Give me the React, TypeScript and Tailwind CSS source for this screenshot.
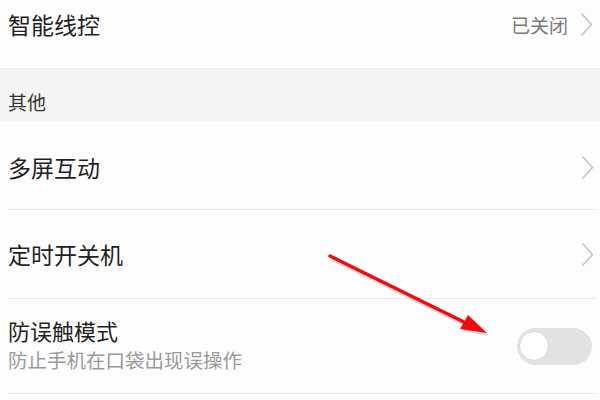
const font = { fontFamily: '"Noto Sans CJK SC", "Noto Sans", sans-serif' };

const Chevron = () => (
  <svg width="13" height="25" viewBox="0 0 13 25" className="shrink-0">
    <path d="M1.5 1.5 L11.5 12.5 L1.5 23.5" fill="none" stroke="#c4c4c4" strokeWidth="1.6" />
  </svg>
);

const Divider = () => <div className="ml-2 mr-1 h-px bg-[#ebebeb]" />;

export default function App() {
  return (
    <div
      className="relative w-[600px] h-[400px] overflow-hidden bg-[#fdfdfd] text-[#1f1f1f]"
      style={font}
    >
      <div className="-mt-5 flex h-[88px] items-center justify-between pl-2 pr-[7px]">
        <span className="text-[23px] leading-none">智能线控</span>
        <div className="flex items-center gap-3">
          <span className="text-[19px] leading-none text-[#7a7a7a]">已关闭</span>
          <Chevron />
        </div>
      </div>

      <div className="flex h-[53px] items-end border-t border-[#efefef] bg-[#f5f5f5] pb-[10px] pl-2">
        <span className="text-[19px] leading-none text-[#333]">其他</span>
      </div>

      <div className="flex h-[88px] items-center justify-between pl-2 pr-[6px] pt-1">
        <span className="text-[23px] leading-none">多屏互动</span>
        <Chevron />
      </div>
      <Divider />

      <div className="flex h-[88px] items-center justify-between pl-2 pr-[6px]">
        <span className="text-[23px] leading-none">定时开关机</span>
        <Chevron />
      </div>
      <Divider />

      <div className="flex h-[94px] items-center justify-between pl-2 pr-2">
        <div className="flex flex-col gap-[9px] pb-1">
          <span className="text-[22px] leading-none">防误触模式</span>
          <span className="text-[19.5px] leading-none text-[#9a9a9a]">防止手机在口袋出现误操作</span>
        </div>
        <div className="flex h-[37px] w-[75px] items-center rounded-full bg-[#e2e2e2] px-[2px]">
          <div className="h-[30px] w-[30px] rounded-full border border-[#d6d6d6] bg-white" />
        </div>
      </div>
      <Divider />

      <svg
        className="pointer-events-none absolute left-0 top-0"
        width="600"
        height="400"
        viewBox="0 0 600 400"
      >
        <g transform="translate(2,3)" opacity="0.25">
          <line x1="330" y1="256" x2="468" y2="324" stroke="#555" strokeWidth="3.5" />
          <polygon points="487,333 461,328 468,316" fill="#555" />
        </g>
        <line x1="330" y1="256" x2="468" y2="324" stroke="#f00c0c" strokeWidth="3.5" strokeLinecap="round" />
        <polygon points="487,333 460,329 468,315" fill="#f00c0c" />
      </svg>
    </div>
  );
}
